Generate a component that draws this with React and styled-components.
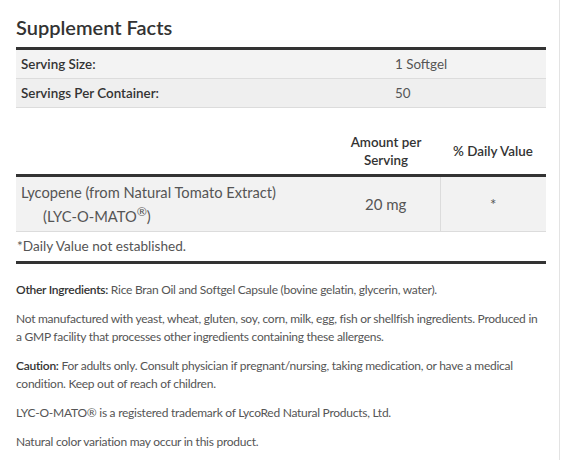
import React from "react";
import styled, { createGlobalStyle } from "styled-components";

const GlobalStyle = createGlobalStyle`
  body {
    margin: 0;
    background: #fff;
    font-family: Lato, "Liberation Sans", sans-serif;
    color: #555;
  }
`;

const Page = styled.div`
  width: 543px;
  height: 460px;
  padding: 0 0 0 16px;
  border-right: 1px solid #e3e3e3;
  box-sizing: content-box;
  overflow: hidden;
`;

const Content = styled.div`
  width: 530px;
`;

const Title = styled.h2`
  margin: 0;
  padding-top: 14px;
  height: 33px;
  font-size: 20px;
  font-weight: 600;
  color: #333;
  line-height: 26px;
`;

const FactsTable = styled.table`
  width: 100%;
  border-collapse: collapse;
  border-top: 3px solid #333;
  font-size: 13.4px;
`;

const FactRow = styled.tr`
  background: ${(p) => (p.$alt ? "#efefef" : "#f3f3f3")};
  border-bottom: 1px solid #dcdcdc;
`;

const FactLabel = styled.td`
  height: 28px;
  padding: 0 5px;
  font-weight: 600;
  color: #333;
  width: 364px;
`;

const FactValue = styled.td`
  padding: 0 5px;
  color: #555;
`;

const NutrientTable = styled.table`
  width: 100%;
  margin-top: 21px;
  border-collapse: collapse;
  font-size: 13.4px;
`;

const HeadCell = styled.th`
  font-weight: 600;
  color: #333;
  text-align: center;
  line-height: 18px;
  padding: 4px 5px 5px;
  width: ${(p) => p.$width || "auto"};
  border-bottom: 3px solid #333;
`;

const BodyRow = styled.tr`
  background: #f2f2f2;
  border-bottom: 1px solid #dcdcdc;
`;

const NameCell = styled.td`
  padding: 5px 5px;
  line-height: 20px;
  font-size: 14.7px;
  color: #555;
`;

const Indent = styled.span`
  display: block;
  padding-left: 22px;
`;

const NumCell = styled.td`
  text-align: center;
  padding: 5px;
  font-size: 15px;
  color: #555;
  border-left: ${(p) => (p.$divider ? "1px solid #dcdcdc" : "none")};
`;

const FootCell = styled.td`
  height: 29px;
  padding: 0 1px;
  font-size: 13.6px;
  color: #555;
  border-bottom: 3px solid #333;
`;

const Notes = styled.div`
  width: 527px;
  padding-top: 17px;
`;

const Note = styled.p`
  margin: 0 0 11px;
  font-size: 12px;
  line-height: 18px;
  letter-spacing: -0.26px;
  color: #555;
`;

const Label = styled.strong`
  font-weight: 600;
  color: #333;
`;

export default function App() {
  return (
    <>
      <GlobalStyle />
      <Page>
        <Content>
          <Title>Supplement Facts</Title>
          <FactsTable>
            <tbody>
              <FactRow>
                <FactLabel>Serving Size:</FactLabel>
                <FactValue>1 Softgel</FactValue>
              </FactRow>
              <FactRow $alt>
                <FactLabel>Servings Per Container:</FactLabel>
                <FactValue>50</FactValue>
              </FactRow>
            </tbody>
          </FactsTable>

          <NutrientTable>
            <thead>
              <tr>
                <HeadCell />
                <HeadCell $width="98px">Amount per<br />Serving</HeadCell>
                <HeadCell $width="96px">% Daily Value</HeadCell>
              </tr>
            </thead>
            <tbody>
              <BodyRow>
                <NameCell>
                  Lycopene (from Natural Tomato Extract)
                  <Indent>(LYC-O-MATO<sup>®</sup>)</Indent>
                </NameCell>
                <NumCell>20 mg</NumCell>
                <NumCell $divider>*</NumCell>
              </BodyRow>
              <tr>
                <FootCell colSpan={3}>*Daily Value not established.</FootCell>
              </tr>
            </tbody>
          </NutrientTable>

          <Notes>
            <Note>
              <Label>Other Ingredients:</Label> Rice Bran Oil and Softgel Capsule (bovine gelatin, glycerin, water).
            </Note>
            <Note>
              Not manufactured with yeast, wheat, gluten, soy, corn, milk, egg, fish or shellfish ingredients. Produced in a GMP facility that processes other ingredients containing these allergens.
            </Note>
            <Note>
              <Label>Caution:</Label> For adults only. Consult physician if pregnant/nursing, taking medication, or have a medical condition. Keep out of reach of children.
            </Note>
            <Note>LYC-O-MATO® is a registered trademark of LycoRed Natural Products, Ltd.</Note>
            <Note>Natural color variation may occur in this product.</Note>
          </Notes>
        </Content>
      </Page>
    </>
  );
}
